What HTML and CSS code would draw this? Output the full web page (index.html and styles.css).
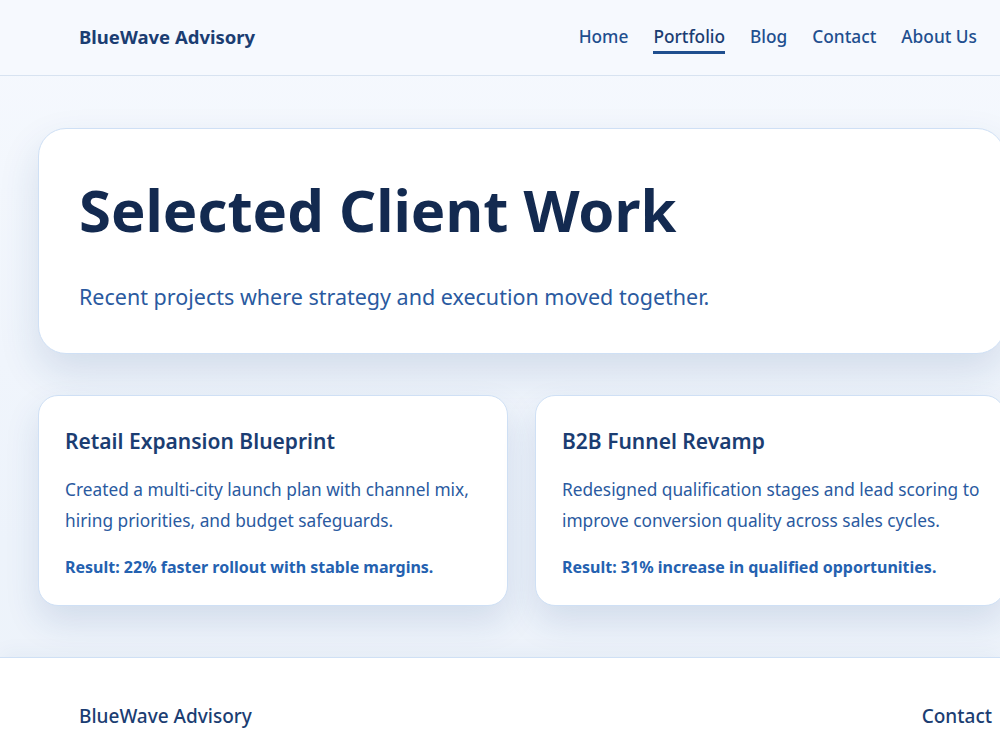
FILE: index.html
```html
<!DOCTYPE html>
<html lang="en">
<head>
    <meta charset="UTF-8">
    <title>Portfolio - BlueWave Advisory</title>
    <link rel="stylesheet" href="styles.css">
</head>
<body>
    <!-- Header -->
    <header class="site-header">
        <div class="brand">BlueWave Advisory</div>
        <nav class="main-nav">
            <a href="#">Home</a>
            <a href="#" class="active">Portfolio</a>
            <a href="#">Blog</a>
            <a href="#">Contact</a>
            <a href="#">About Us</a>
        </nav>
    </header>

    <main class="content">
        <!-- Hero -->
        <section class="hero">
            <h1>Selected Client Work</h1>
            <p>Recent projects where strategy and execution moved together.</p>
        </section>

        <!-- Case studies -->
        <section class="cases">
            <article class="case-card">
                <h2>Retail Expansion Blueprint</h2>
                <p>Created a multi-city launch plan with channel mix, hiring priorities, and budget safeguards.</p>
                <p class="result">Result: 22% faster rollout with stable margins.</p>
            </article>
            <article class="case-card">
                <h2>B2B Funnel Revamp</h2>
                <p>Redesigned qualification stages and lead scoring to improve conversion quality across sales cycles.</p>
                <p class="result">Result: 31% increase in qualified opportunities.</p>
            </article>
        </section>
    </main>

    <!-- Footer -->
    <footer class="site-footer">
        <div class="footer-brand">BlueWave Advisory</div>
        <a href="#" class="footer-link">Contact</a>
    </footer>
</body>
</html>
```

FILE: styles.css
```css
/* Page */
html, body {
    overflow-x: hidden;
}

body {
    margin: 0;
    font-family: "Noto Sans", "Open Sans", sans-serif;
    color: #1b3d72;
    background: linear-gradient(to bottom, #f6f9fe 0%, #edf3fb 70%, #eef3fa 100%);
}

/* Header */
.site-header {
    display: flex;
    justify-content: space-between;
    align-items: center;
    height: 76px;
    padding: 0 23px 0 79px;
    background-color: #f6f9fe;
    border-bottom: 1px solid #d8e3f1;
    box-sizing: border-box;
}

.brand {
    font-size: 18.5px;
    font-weight: 700;
    color: #1b3d72;
    margin-top: -3px;
}

.main-nav {
    display: flex;
    gap: 25px;
}

.main-nav a {
    font-size: 17.3px;
    font-weight: 500;
    color: #1f4f8f;
    text-decoration: none;
    padding: 4px 0 3px;
    border-bottom: 3px solid transparent;
}

.main-nav a.active {
    color: #1b3d72;
    border-bottom-color: #1f4f8f;
}

/* Main content */
.content {
    width: 967px;
    padding: 52px 0 51px 38px;
}

.hero {
    background-color: #ffffff;
    border: 1px solid #cfe0f5;
    border-radius: 28px;
    padding: 46px 40px 42px;
    box-shadow: 0 18px 40px rgba(30, 70, 130, 0.14);
}

.hero h1 {
    margin: 0;
    font-size: 58px;
    font-weight: 700;
    line-height: 1.2;
    color: #132a50;
}

.hero p {
    margin: 37px 0 0;
    font-size: 21.5px;
    color: #2a5aa0;
}

/* Case study cards */
.cases {
    display: grid;
    grid-template-columns: 470px 470px;
    gap: 27px;
    margin-top: 41px;
}

.case-card {
    background-color: #ffffff;
    border: 1px solid #cfe0f5;
    border-radius: 20px;
    padding: 31px 18px 22px 26px;
    box-shadow: 0 16px 34px rgba(30, 70, 130, 0.13);
}

.case-card h2 {
    margin: 0 0 19px;
    font-size: 21px;
    font-weight: 600;
    color: #1b3d72;
}

.case-card p {
    margin: 0;
    font-size: 17.3px;
    line-height: 31px;
    color: #2a5aa0;
}

.case-card .result {
    margin-top: 16px;
    font-size: 16px;
    font-weight: 700;
    color: #2461b0;
}

/* Footer */
.site-footer {
    display: flex;
    justify-content: space-between;
    align-items: center;
    height: 116px;
    padding: 0 8px 0 79px;
    background-color: #ffffff;
    border-top: 1px solid #cfe0f5;
    box-shadow: 0 -6px 18px rgba(30, 70, 130, 0.04);
}

.footer-brand,
.footer-link {
    font-size: 19px;
    font-weight: 500;
    color: #1b3d72;
    text-decoration: none;
}
```
